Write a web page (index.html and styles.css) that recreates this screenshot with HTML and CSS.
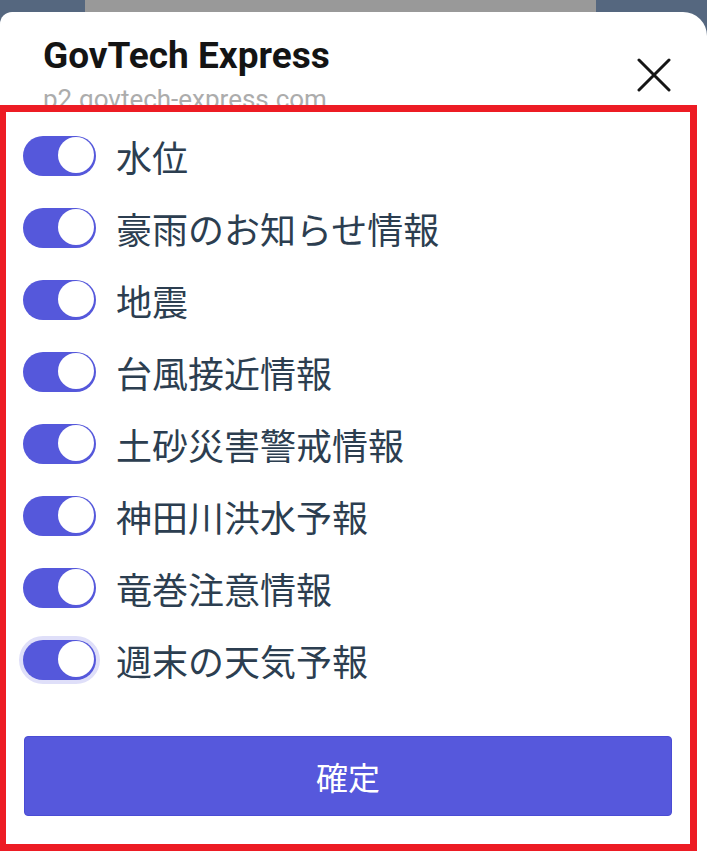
FILE: index.html
```html
<!DOCTYPE html>
<html lang="ja">
<head>
    <meta charset="UTF-8">
    <meta name="viewport" content="width=device-width, initial-scale=1.0">
    <title>GovTech Express</title>
    <link rel="stylesheet" href="styles.css">
</head>
<body>
    <div class="backdrop">
        <div class="backdrop-side"></div>
        <div class="backdrop-mid"></div>
        <div class="backdrop-side backdrop-right"></div>
    </div>

    <div class="sheet">
        <div class="sheet-header">
            <div class="sheet-titles">
                <h1 class="sheet-title">GovTech Express</h1>
                <div class="sheet-url">p2.govtech-express.com</div>
            </div>
            <button class="close-btn" type="button" aria-label="閉じる">
                <svg width="34" height="34" viewBox="0 0 34 34">
                    <path d="M2 2 L32 32 M32 2 L2 32" stroke="#161616" stroke-width="3" stroke-linecap="round" fill="none"/>
                </svg>
            </button>
        </div>

        <div class="settings">
            <ul class="topic-list">
                <li class="topic"><span class="switch"></span><span class="topic-name">水位</span></li>
                <li class="topic"><span class="switch"></span><span class="topic-name">豪雨のお知らせ情報</span></li>
                <li class="topic"><span class="switch"></span><span class="topic-name">地震</span></li>
                <li class="topic"><span class="switch"></span><span class="topic-name">台風接近情報</span></li>
                <li class="topic"><span class="switch"></span><span class="topic-name">土砂災害警戒情報</span></li>
                <li class="topic"><span class="switch"></span><span class="topic-name">神田川洪水予報</span></li>
                <li class="topic"><span class="switch"></span><span class="topic-name">竜巻注意情報</span></li>
                <li class="topic"><span class="switch switch-focus"></span><span class="topic-name">週末の天気予報</span></li>
            </ul>
            <button class="confirm-btn" type="button">確定</button>
        </div>
    </div>
</body>
</html>
```

FILE: styles.css
```css
body {
    margin: 0;
    background-color: #ffffff;
    font-family: Roboto, "Noto Sans CJK JP", sans-serif;
    overflow: hidden;
}
.backdrop {
    display: flex;
    height: 40px;
}
.backdrop-side {
    width: 85px;
    background-color: #55677f;
}
.backdrop-right {
    width: 111px;
}
.backdrop-mid {
    flex: 1;
    background-color: #999999;
}
.sheet {
    position: relative;
    margin-top: -28px;
    background-color: #ffffff;
    border-radius: 12px 24px 0 0;
    min-height: 853px;
}
.sheet-header {
    display: flex;
    justify-content: space-between;
    padding: 22px 36px 0 43px;
}
.sheet-title {
    margin: 0;
    font-size: 37px;
    line-height: 44px;
    font-weight: 700;
    color: #141414;
}
.sheet-url {
    margin-top: 6px;
    font-size: 26px;
    line-height: 30px;
    color: #acacac;
}
.close-btn {
    margin-top: 24px;
    padding: 0;
    border: none;
    background: none;
    width: 34px;
    height: 34px;
}
.close-btn svg {
    display: block;
}
.settings {
    position: relative;
    margin-top: -9px;
    border: 7px solid #ed1c24;
    border-left-width: 6px;
    background-color: #ffffff;
    padding: 24px 13px 28px 17px;
    width: 654px;
}
.topic-list {
    list-style: none;
    margin: 0;
    padding: 0;
    display: flex;
    flex-direction: column;
    gap: 32px;
}
.topic {
    display: flex;
    align-items: center;
    gap: 20px;
    height: 40px;
}
.switch {
    position: relative;
    flex: none;
    width: 73px;
    height: 40px;
    border-radius: 20px;
    background-color: #5558db;
}
.switch::after {
    content: "";
    position: absolute;
    top: 1px;
    right: 2px;
    width: 36px;
    height: 36px;
    border-radius: 50%;
    background-color: #ffffff;
}
.switch-focus {
    box-shadow: 0 0 0 4px #dfdff9;
}
.topic-name {
    font-family: "Noto Sans CJK JP", sans-serif;
    font-size: 36px;
    line-height: 40px;
    color: #2c3e50;
}
.confirm-btn {
    display: block;
    margin-top: 56px;
    width: 648px;
    height: 80px;
    margin-left: 1px;
    background-color: #5658dc;
    border: 1px solid #4a4cd4;
    border-radius: 4px;
    color: #ffffff;
    font-family: "Noto Sans CJK JP", sans-serif;
    font-size: 32px;
    cursor: pointer;
}
```
